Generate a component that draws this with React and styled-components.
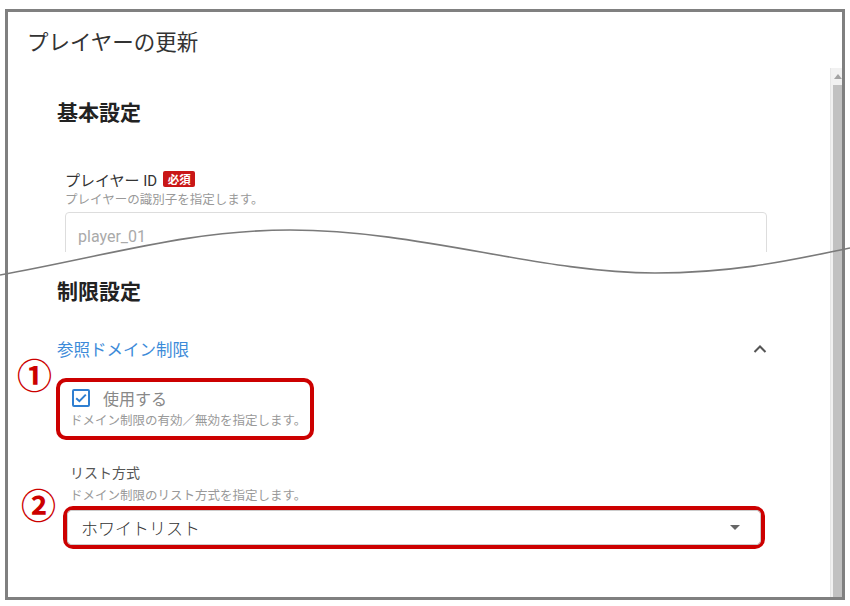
import React from "react";
import styled, { createGlobalStyle } from "styled-components";

const GlobalStyle = createGlobalStyle`
  html, body { margin: 0; padding: 0; background: #ffffff; }
  body { font-family: Roboto, "Noto Sans CJK JP", sans-serif; }
  * { box-sizing: border-box; }
`;

const Page = styled.div`
  position: relative;
  width: 850px;
  height: 606px;
  overflow: hidden;
`;

const Frame = styled.div`
  margin: 9px 5px 0 5px;
  width: 840px;
  height: 591px;
  border: 3px solid #808080;
  display: flex;
  flex-direction: column;
  overflow: hidden;
  background: #fff;
`;

const Header = styled.div`
  height: 56px;
  flex: none;
  display: flex;
  align-items: center;
  padding: 1px 0 0 19px;
`;

const Title = styled.h1`
  margin: 0;
  font-size: 21.5px;
  font-weight: 400;
  color: #333;
  font-family: "Noto Sans CJK JP", sans-serif;
`;

const Body = styled.div`
  flex: 1;
  display: flex;
  min-height: 0;
`;

const Content = styled.div`
  flex: 1;
  padding: 29px 63px 0 49px;
  font-family: Roboto, "Noto Sans CJK JP", sans-serif;
`;

const ScrollBar = styled.div`
  width: 12px;
  flex: none;
  display: flex;
  flex-direction: column;
  background: #f1f1f1;
  border-left: 1px solid #e6e6e6;
`;

const ScrollArrow = styled.div`
  height: 17px;
  flex: none;
  display: flex;
  align-items: center;
  justify-content: flex-end;
`;

const ScrollThumb = styled.div`
  flex: 1;
  margin-left: 2px;
  background: #c1c1c1;
`;

const SectionHeading = styled.h2`
  margin: ${(p) => p.$top || 0}px 0 0 0;
  font-size: 21px;
  line-height: 28px;
  font-weight: 700;
  color: #222;
  font-family: "Noto Sans CJK JP", sans-serif;
`;

const Field = styled.div`
  margin-top: ${(p) => p.$top || 0}px;
  padding-left: ${(p) => p.$indent || 0}px;
`;

const LabelRow = styled.div`
  display: flex;
  align-items: center;
  gap: 6px;
  height: 20px;
  font-size: ${(p) => p.$size || 14}px;
  color: ${(p) => p.$color || "#333"};
`;

const Badge = styled.span`
  display: inline-flex;
  align-items: center;
  justify-content: center;
  width: 32px;
  height: 16px;
  border-radius: 2px;
  background: #c91717;
  color: #fff;
  font-size: 11.5px;
  font-weight: 700;
  font-family: "Noto Sans CJK JP", serif;
`;

const Desc = styled.div`
  margin-top: ${(p) => p.$top ?? 2}px;
  font-size: 12.5px;
  line-height: 16px;
  color: #999;
  white-space: nowrap;
  font-family: "Noto Sans CJK JP", sans-serif;
`;

const Cut = styled.div`
  margin-top: 5px;
  height: 40px;
  overflow: hidden;
`;

const TextBox = styled.div`
  height: 48px;
  border: 1px solid #dddddd;
  border-radius: 4px;
  padding-left: 12px;
  display: flex;
  align-items: center;
  font-size: 16px;
  color: #aaa;
`;

const AccordionHeader = styled.div`
  margin-top: 33px;
  height: 24px;
  display: flex;
  align-items: center;
  justify-content: space-between;
  font-size: 16.5px;
  color: #3d8bd9;
  font-family: "Noto Sans CJK JP", sans-serif;
`;

const Highlight = styled.div`
  position: relative;
  width: fit-content;
  margin-top: ${(p) => p.$top || 0}px;
  margin-left: ${(p) => p.$left || 0}px;
  border: 4px solid #cc0000;
  border-radius: 10px;
  padding: ${(p) => p.$pad || "0"};
`;

const SelectFrame = styled.div`
  position: relative;
  margin-top: 3px;
  margin-left: -7px;
  width: 702px;
  border: 4px solid #cc0000;
  border-radius: 10px;
`;

const Marker = styled.span`
  position: absolute;
  left: ${(p) => p.$x}px;
  top: ${(p) => p.$y}px;
  font-size: 35px;
  line-height: 1;
  font-weight: 700;
  color: #cc0000;
  font-family: "Noto Sans CJK JP", sans-serif;
`;

const CheckRow = styled.div`
  display: flex;
  align-items: center;
  gap: 13px;
  height: 24px;
  padding-left: 2px;
  font-size: 16px;
  color: #888;
  font-family: "Noto Sans CJK JP", sans-serif;
`;

const CheckBox = styled.span`
  width: 18px;
  height: 18px;
  border: 2px solid #2f7fd1;
  border-radius: 2px;
  display: inline-flex;
  align-items: center;
  justify-content: center;
`;

const Select = styled.div`
  height: 35px;
  border: 1px solid #cccccc;
  border-radius: 4px;
  display: flex;
  align-items: center;
  justify-content: space-between;
  padding: 0 20px 0 13px;
  font-size: 17px;
  font-weight: 300;
  color: #333;
  font-family: "Noto Sans CJK JP", sans-serif;
`;

const Wave = styled.svg`
  position: absolute;
  left: 0;
  top: 0;
  pointer-events: none;
`;

export default function App() {
  return (
    <Page>
      <GlobalStyle />
      <Frame>
        <Header>
          <Title>プレイヤーの更新</Title>
        </Header>
        <Body>
          <Content>
            <SectionHeading>基本設定</SectionHeading>
            <Field $top={44} $indent={8}>
              <LabelRow $size={15}>
                <span>プレイヤー ID</span>
                <Badge>必須</Badge>
              </LabelRow>
              <Desc>プレイヤーの識別子を指定します。</Desc>
              <Cut>
                <TextBox>player_01</TextBox>
              </Cut>
            </Field>

            <SectionHeading $top={24}>制限設定</SectionHeading>
            <AccordionHeader>
              <span>参照ドメイン制限</span>
              <svg width="14" height="10" viewBox="0 0 14 10">
                <path d="M1.5 8 L7 2.5 L12.5 8" fill="none" stroke="#555" strokeWidth="2" />
              </svg>
            </AccordionHeader>

            <Highlight $top={17} $left={-1} $pad="4px 4px 8px 10px">
              <Marker $x={-43} $y={-26}>①</Marker>
              <CheckRow>
                <CheckBox>
                  <svg width="12" height="10" viewBox="0 0 12 10">
                    <path d="M1.2 5.2 L4.4 8.2 L10.8 1.6" fill="none" stroke="#2f7fd1" strokeWidth="2" />
                  </svg>
                </CheckBox>
                <span>使用する</span>
              </CheckRow>
              <Desc>ドメイン制限の有効／無効を指定します。</Desc>
            </Highlight>

            <Field $top={22} $indent={13}>
              <LabelRow $color="#555">
                <span>リスト方式</span>
              </LabelRow>
              <Desc $top={5}>ドメイン制限のリスト方式を指定します。</Desc>
              <SelectFrame>
                <Marker $x={-46} $y={-24}>②</Marker>
                <Select>
                  <span>ホワイトリスト</span>
                  <svg width="10" height="5" viewBox="0 0 10 5">
                    <path d="M0 0 L10 0 L5 5 Z" fill="#666" />
                  </svg>
                </Select>
              </SelectFrame>
            </Field>
          </Content>
          <ScrollBar>
            <ScrollArrow>
              <svg width="8" height="5" viewBox="0 0 8 5">
                <path d="M0 5 L4 0 L8 5 Z" fill="#a3a3a3" />
              </svg>
            </ScrollArrow>
            <ScrollThumb />
          </ScrollBar>
        </Body>
      </Frame>
      <Wave width="850" height="606" viewBox="0 0 850 606">
        <path
          d="M0 275 C 110 255 190 230 290 230 C 420 230 540 273 655 273 C 740 273 800 258 850 248"
          fill="none"
          stroke="#7a7a7a"
          strokeWidth="1.6"
        />
      </Wave>
    </Page>
  );
}
